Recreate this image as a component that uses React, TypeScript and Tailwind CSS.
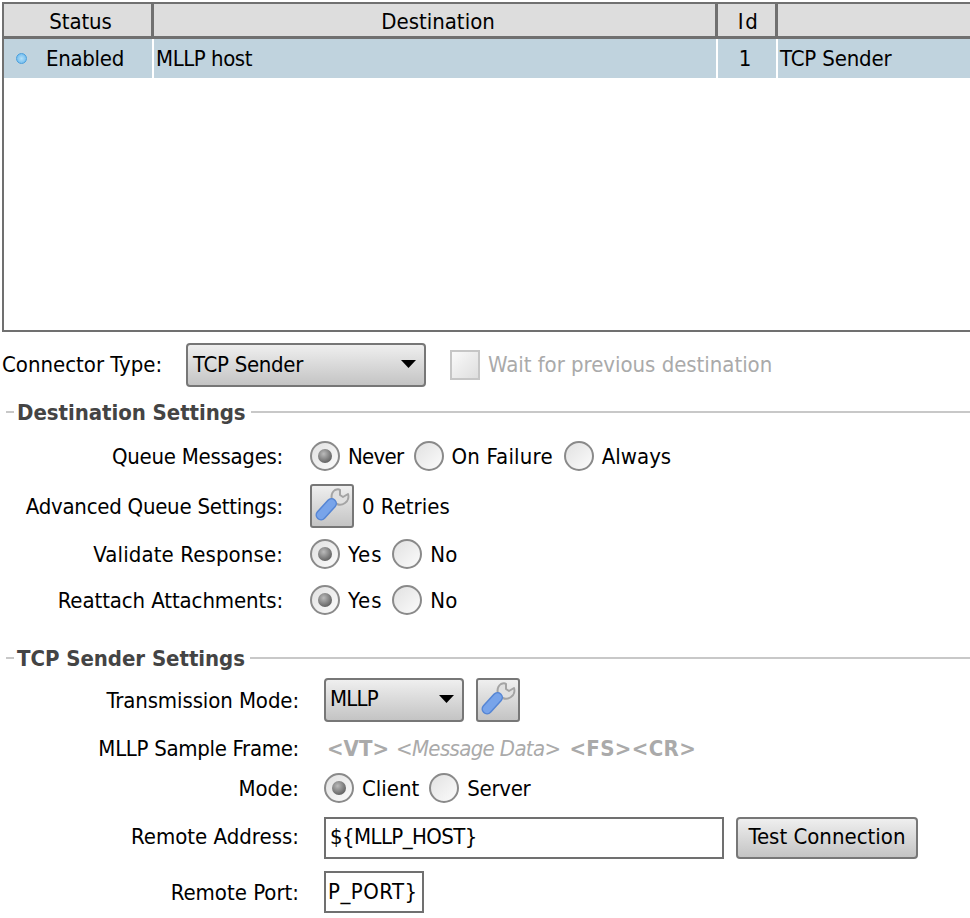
import React from "react";

const FONT = "font-['DejaVu_Sans_Condensed','Liberation_Sans',sans-serif]";
const GRAD = "bg-gradient-to-b from-[#efefef] to-[#c4c4c4]";

function Wrench() {
  return (
    <svg width="36" height="36" viewBox="0 0 36 36" className="block">
      <path d="M18 12 C17 8 18 4 21 2 C23 1 25 1 26 2 L26 7 L29 9 L34 6 C35 9 34 13 31 15 C28 17 25 17 23 16 Z" fill="#e0e0e0" stroke="#a4a4a4" strokeWidth="2" strokeLinejoin="round" />
      <line x1="7" y1="27" x2="17.500" y2="15.500" stroke="#5585d4" strokeWidth="11" strokeLinecap="round" />
      <line x1="7" y1="27" x2="17.500" y2="15.500" stroke="#78a4ea" strokeWidth="8" strokeLinecap="round" />
    </svg>
  );
}

function WrenchButton() {
  return (
    <div className={`flex h-[44px] w-[44px] items-center justify-center rounded-[3px] border-2 border-[#777] ${GRAD}`}>
      <Wrench />
    </div>
  );
}

function Radio({ on, label, track }: { on?: boolean; label: string; track?: string }) {
  return (
    <div className="flex items-center gap-[8px]">
      <div className="flex h-[30px] w-[30px] items-center justify-center rounded-full border-2 border-[#8a8a8a] bg-gradient-to-br from-[#e2e2e2] to-[#fbfbfb]">
        {on && <div className="h-[14px] w-[14px] rounded-full bg-[radial-gradient(circle_at_40%_35%,#bbbbbb,#444444)]" />}
      </div>
      <span className={`pt-[2px] ${track ?? ""}`}>{label}</span>
    </div>
  );
}

function Select({ label, width, textClass }: { label: string; width: string; textClass: string }) {
  return (
    <div className={`flex h-[44px] ${width} items-center justify-between rounded-[4px] border-2 border-[#777] pr-[8px] ${GRAD}`}>
      <span className={textClass}>{label}</span>
      <svg width="15" height="8" viewBox="0 0 15 8" className="mb-[3px]"><path d="M0 0H15L7.500 8Z" fill="#000" /></svg>
    </div>
  );
}

function SectionTitle({ title, className }: { title: string; className: string }) {
  return (
    <div className={`flex h-[24px] items-center ${className}`}>
      <div className="ml-[6px] h-[2px] w-[8px] bg-[#c8c8c8]" />
      <span className="ml-[3px] mr-[4px] pt-[2px] font-bold tracking-[-0.05px] text-[#444]">{title}</span>
      <div className="ml-[1px] h-[2px] flex-1 bg-[#c8c8c8]" />
    </div>
  );
}

function Row({ label, labelW, h, className, labelClass, children }: { label: string; labelW: string; h: string; className?: string; labelClass?: string; children: React.ReactNode }) {
  return (
    <div className={`flex items-center ${h} ${className ?? ""}`}>
      <div className={`${labelW} shrink-0 text-right ${labelClass ?? "pt-[2px]"}`}>{label}</div>
      {children}
    </div>
  );
}

export default function App() {
  return (
    <div className={`h-[918px] w-[970px] overflow-hidden bg-white pt-[2px] text-[22px] leading-none text-black ${FONT}`}>
      <div className="ml-[2px] h-[330px] border-2 border-r-0 border-[#707070]">
        <div className="flex h-[35px] border-b-[3px] border-[#707070] bg-[#dddddd]">
          <div className="flex w-[150px] items-center justify-center border-r-[3px] border-[#707070] pl-[6px] pt-[3px] tracking-[-0.1px]">Status</div>
          <div className="flex w-[564px] items-center justify-center border-r-[3px] border-[#707070] pl-[7px] pt-[3px]">Destination</div>
          <div className="flex w-[60px] items-center justify-center border-r-[3px] border-[#707070] pl-[4px] pt-[3px] tracking-[1.5px]">Id</div>
          <div className="flex-1" />
        </div>
        <div className="flex h-[39px] bg-[#c0d3de]">
          <div className="flex w-[150px] items-center border-r-2 border-white pl-[12px]">
            <div className="h-[11px] w-[11px] rounded-full border border-[#4a9fdc] bg-[radial-gradient(circle,#b4e0f8,#62b4ec)]" />
            <span className="ml-[19px] tracking-[-0.3px]">Enabled</span>
          </div>
          <div className="flex w-[564px] items-center border-r-2 border-white pl-[2px] tracking-[-0.45px]">MLLP host</div>
          <div className="flex w-[60px] items-center justify-center border-r-2 border-white pr-[4px]">1</div>
          <div className="flex flex-1 items-center pl-[2px] tracking-[-0.15px]">TCP Sender</div>
        </div>
      </div>

      <div className="mt-[12px] flex h-[42px] items-center">
        <div className="ml-[2px] w-[184px]">Connector Type:</div>
        <Select label="TCP Sender" width="w-[240px]" textClass="pl-[5px] tracking-[-0.3px]" />
        <div className="ml-[24px] h-[30px] w-[30px] border-2 border-[#c6c6c6] bg-gradient-to-br from-[#fafafa] to-[#dedede]" />
        <span className="ml-[8px] tracking-[-0.03px] text-[#aaaaaa]">Wait for previous destination</span>
      </div>

      <SectionTitle title="Destination Settings" className="mt-[14px]" />

      <Row label="Queue Messages:" labelW="w-[283px]" h="h-[44px]" className="mt-[10px]" labelClass="pt-[2px] tracking-[-0.27px]">
        <div className="ml-[27px] flex items-center gap-[10px]">
          <Radio on label="Never" track="tracking-[-0.7px]" />
          <Radio label="On Failure" track="tracking-[0.2px]" />
          <div className="ml-[1px]"><Radio label="Always" /></div>
        </div>
      </Row>
      <Row label="Advanced Queue Settings:" labelW="w-[283px]" h="h-[44px]" className="mt-[6px]" labelClass="pt-[2px] tracking-[-0.25px]">
        <div className="ml-[27px] flex items-center gap-[8px]">
          <WrenchButton />
          <span className="pt-[2px]">0 Retries</span>
        </div>
      </Row>
      <Row label="Validate Response:" labelW="w-[283px]" h="h-[44px]" className="mt-[4px]" labelClass="pt-[2px] tracking-[0.12px]">
        <div className="ml-[27px] flex items-center gap-[10px]">
          <Radio on label="Yes" track="tracking-[0.9px]" />
          <Radio label="No" track="tracking-[0.1px]" />
        </div>
      </Row>
      <Row label="Reattach Attachments:" labelW="w-[283px]" h="h-[44px]" className="mt-[2px]" labelClass="pt-[2px] tracking-[-0.1px]">
        <div className="ml-[27px] flex items-center gap-[10px]">
          <Radio on label="Yes" track="tracking-[0.9px]" />
          <Radio label="No" track="tracking-[0.1px]" />
        </div>
      </Row>

      <SectionTitle title="TCP Sender Settings" className="mt-[24px]" />

      <Row label="Transmission Mode:" labelW="w-[299px]" h="h-[44px]" className="mt-[8px]" labelClass="pt-[2px] tracking-[-0.1px]">
        <div className="ml-[25px] flex items-center gap-[12px]">
          <Select label="MLLP" width="w-[140px]" textClass="mb-[3px] pl-[4px] tracking-[-0.8px]" />
          <WrenchButton />
        </div>
      </Row>
      <Row label="MLLP Sample Frame:" labelW="w-[299px]" h="h-[28px]" className="mt-[12px]" labelClass="pt-[2px] tracking-[-0.3px]">
        <div className="ml-[28px] flex items-center pt-[2px] text-[#aaaaaa]">
          <span className="font-bold">&lt;VT&gt;</span>
          <span className="ml-[7px] italic tracking-[-0.65px]">&lt;Message Data&gt;</span>
          <span className="ml-[9px] font-bold tracking-[0.35px]">&lt;FS&gt;&lt;CR&gt;</span>
        </div>
      </Row>
      <Row label="Mode:" labelW="w-[299px]" h="h-[30px]" className="mt-[11px]">
        <div className="ml-[25px] flex items-center gap-[10px]">
          <Radio on label="Client" />
          <Radio label="Server" track="tracking-[-0.3px]" />
        </div>
      </Row>
      <Row label="Remote Address:" labelW="w-[299px]" h="h-[42px]" className="mt-[14px]" labelClass="pb-[2px]">
        <div className="ml-[25px] flex h-full w-[400px] items-center border-2 border-[#707070] pb-[2px] pl-[4px] tracking-[-0.6px]">{"${MLLP_HOST}"}</div>
        <div className={`ml-[12px] flex h-full w-[182px] items-center justify-center rounded-[4px] border-2 border-[#777] pb-[2px] ${GRAD}`}>Test Connection</div>
      </Row>
      <Row label="Remote Port:" labelW="w-[299px]" h="h-[42px]" className="mt-[12px]">
        <div className="ml-[25px] flex h-full w-[100px] items-center border-2 border-[#707070] pl-[2px] tracking-[0.5px]">{"P_PORT}"}</div>
      </Row>
    </div>
  );
}
